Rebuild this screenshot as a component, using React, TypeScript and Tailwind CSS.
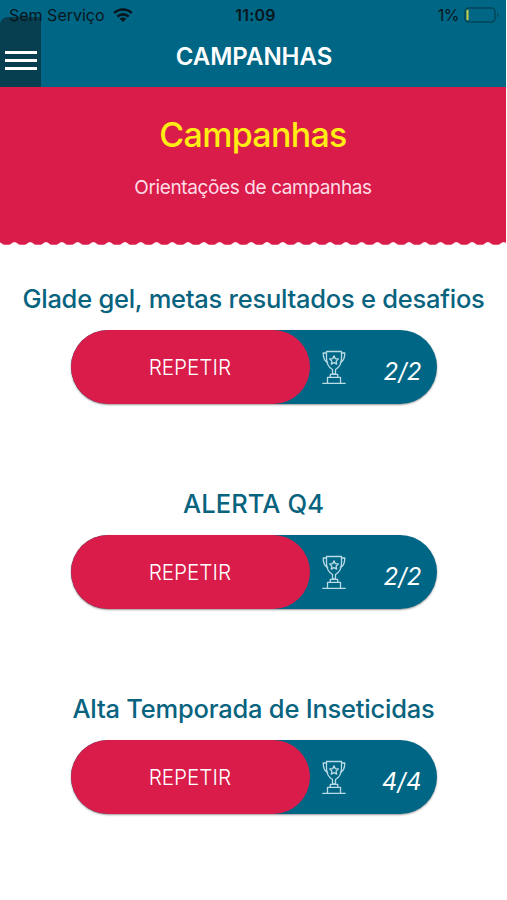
type Campaign = {
  title: string;
  score: string;
  titleClass: string;
};

const campaigns: Campaign[] = [
  { title: 'Glade gel, metas resultados e desafios', score: '2/2', titleClass: 'tracking-[-0.25px]' },
  { title: 'ALERTA Q4', score: '2/2', titleClass: 'tracking-[0.1px]' },
  { title: 'Alta Temporada de Inseticidas', score: '4/4', titleClass: 'tracking-[-0.22px]' },
];

function WifiIcon() {
  return (
    <svg width="20" height="14" viewBox="0 0 20 14" fill="none" stroke="#07171d" strokeWidth="2.6">
      <path d="M1.2 5C6 .3 14 .3 18.8 5" />
      <path d="M4.3 8.6c3.2-3 8.2-3 11.4 0" />
      <path d="M10 14 6.600 10.700c1.800-1.500 5-1.500 6.800 0z" fill="#07171d" stroke="none" />
    </svg>
  );
}

function BatteryIcon() {
  return (
    <svg width="37" height="16" viewBox="0 0 37 16" fill="none">
      <rect x="1" y="1" width="30" height="14" rx="3.5" stroke="#034658" strokeWidth="1.5" />
      <rect x="2.5" y="2.7" width="2" height="10.6" rx=".8" fill="#c9cf45" />
      <path d="M33 5.5c2 .7 2 4.300 0 5z" fill="#034658" />
    </svg>
  );
}

function TrophyIcon() {
  return (
    <svg width="24" height="34" viewBox="0 0 24 34" fill="none" stroke="#b9dbe5" strokeWidth="1.3" strokeLinejoin="round">
      <path d="M4.500 1.500h15V8c0 6-2.500 9.500-6 11.500V24h-3v-4.500C7 17.500 4.500 14 4.500 8z" />
      <path d="M4.500 3H1.200c0 5 1.500 8.500 5 9.500M19.500 3h3.300c0 5-1.500 8.500-5 9.500" />
      <path d="m12 5.900 1.300 2.700 3 .4-2.200 2.100.6 3-2.700-1.500-2.700 1.500.6-3L7.700 9l3-.4z" />
      <path d="M8.300 27v-2.700h7.400V27M5.500 33v-5.700h13V33M.3 33.300h23.400" />
    </svg>
  );
}

function ScallopEdge() {
  return (
    <svg className="block" width="506" height="4" viewBox="0 0 506 4">
      <defs>
        <pattern id="scallop" x="6.6" y="0" width="15.78" height="4" patternUnits="userSpaceOnUse">
          <path d="M0 0h15.780v2.700h-2.500C11 2.700 10.300 0 7.890 0S4.800 2.700 2.500 2.700H0z" fill="#d91c4a" />
        </pattern>
      </defs>
      <rect width="506" height="4" fill="url(#scallop)" />
    </svg>
  );
}

function CampaignRow({ campaign }: { campaign: Campaign }) {
  return (
    <section className="flex h-[205px] flex-col items-center">
      <h2 className={`h-[49px] pt-[2px] text-[25.5px] leading-[32px] font-medium whitespace-nowrap text-[#08637f] ${campaign.titleClass}`}>
        {campaign.title}
      </h2>
      <div className="flex h-[74px] w-[366px] rounded-full bg-[#006685] shadow-[0_1px_2px_rgba(0,0,0,0.4)]">
        <button type="button" className="h-full w-[239px] rounded-full bg-[#d91c4a] pt-px text-[22px] font-light text-white">
          <span className="inline-block origin-center scale-x-[0.94]">REPETIR</span>
        </button>
        <div className="flex flex-1 items-center pl-[12px]">
          <TrophyIcon />
          <span className="ml-auto pt-[10px] pr-[15px] text-[24px] leading-[30px] text-white italic">{campaign.score}</span>
        </div>
      </div>
    </section>
  );
}

export default function App() {
  return (
    <main className="h-[900px] w-[507px] overflow-hidden bg-white font-['Inter',sans-serif]">
      <header className="flex h-[87px] w-[506px] flex-col bg-[#006685]">
        <div className="relative grid h-[30px] grid-cols-3 items-center text-[16px] text-[#07171d]">
          <div className="flex items-center gap-[8px] pl-[9px] whitespace-nowrap">
            <span>Sem Serviço</span>
            <WifiIcon />
          </div>
          <span className="pl-[5px] text-center font-semibold tracking-[0.2px]">11:09</span>
          <div className="flex items-center justify-end gap-[5px] pr-[5px]">
            <span className="tracking-[-0.5px]">1%</span>
            <BatteryIcon />
          </div>
        </div>
        <div className="flex h-[57px] items-end">
          <button type="button" aria-label="Menu" className="flex h-[70px] w-[41px] shrink-0 flex-col items-center gap-[5px] rounded-tl-[8px] bg-[#073e50] pt-[34px]">
            <span className="h-[3px] w-[32px] bg-white" />
            <span className="h-[3px] w-[32px] bg-white" />
            <span className="h-[3px] w-[32px] bg-white" />
          </button>
          <h1 className="mr-[39px] flex-1 self-start pt-[11px] text-center text-[24px] leading-[32px] font-semibold text-white">CAMPANHAS</h1>
        </div>
      </header>
      <div className="flex h-[155px] w-[506px] flex-col items-center bg-[#d91c4a] pt-[27px]">
        <h2 className="text-[34px] leading-[42px] font-[450] tracking-[-0.7px] text-[#ffed14]">Campanhas</h2>
        <p className="mt-[20px] text-[19px] leading-[24px] tracking-[-0.38px] text-[#ffdce5]">Orientações de campanhas</p>
      </div>
      <ScallopEdge />
      <div className="pt-[35px]">
        {campaigns.map((campaign) => (
          <CampaignRow key={campaign.title} campaign={campaign} />
        ))}
      </div>
    </main>
  );
}
